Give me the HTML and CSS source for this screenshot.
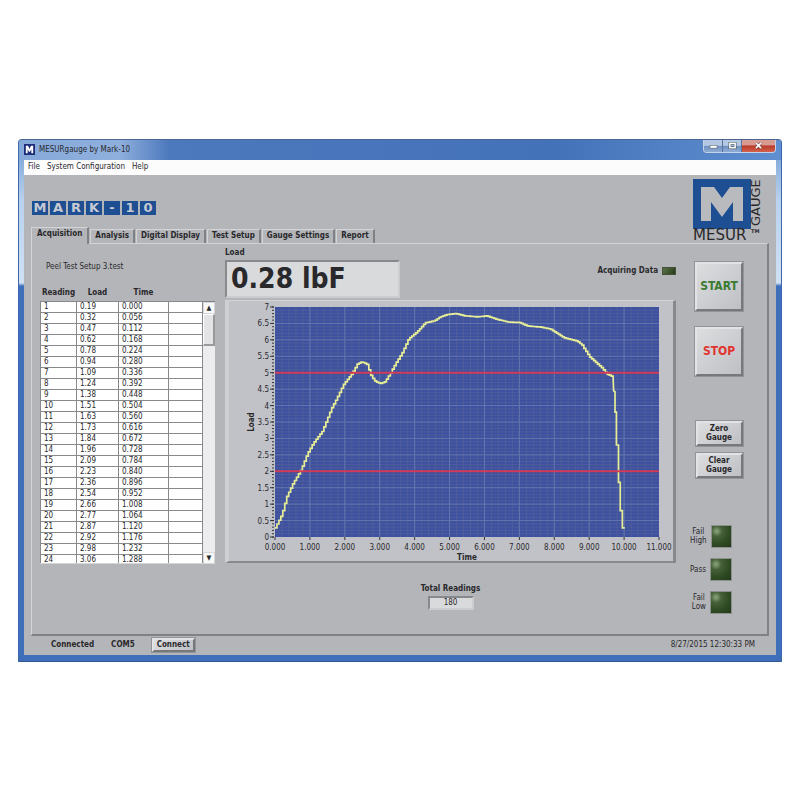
FILE: index.html
```html
<!DOCTYPE html>
<html lang="en">
  <head>
    <meta charset="UTF-8" />
    <meta name="viewport" content="width=device-width, initial-scale=1.0" />
    <title>MESURgauge by Mark-10</title>
    <link rel="stylesheet" href="styles.css">
  </head>
  <body>
    <div class="window">
      <header class="titlebar">
        <svg class="app-icon" viewBox="0 0 12 12" aria-hidden="true">
          <rect width="12" height="12" fill="#1d2c78" />
          <path d="M2 10V2h2.4L6 5.4 7.600 2H10v8H8V5.600L6.600 8.500H5.400L4 5.600V10z" fill="#fff" />
        </svg>
        <h1>MESURgauge by Mark-10</h1>
        <div class="win-buttons">
          <button type="button" aria-label="Minimize">
            <svg viewBox="0 0 10 8"><rect x="1" y="4" width="8" height="3" fill="#fff" stroke="#566" stroke-width=".6" /></svg>
          </button>
          <button type="button" aria-label="Maximize">
            <svg viewBox="0 0 10 8"><rect x="2" y="1.500" width="6" height="5" fill="none" stroke="#455" stroke-width="3" /><rect x="2" y="1.500" width="6" height="5" fill="none" stroke="#fff" stroke-width="1.800" /></svg>
          </button>
          <button type="button" class="close" aria-label="Close">
            <svg viewBox="0 0 10 8"><path d="M2 1l6 6M8 1L2 7" stroke="#533" stroke-width="3" /><path d="M2 1l6 6M8 1L2 7" stroke="#fff" stroke-width="1.900" /></svg>
          </button>
        </div>
      </header>

      <div class="client">
        <nav class="menu">
          <a href="#">File</a>
          <a href="#">System Configuration</a>
          <a href="#">Help</a>
        </nav>

        <div class="brand">
          <div class="left">
            <div class="mark10" aria-label="MARK-10">
              <span>M</span><span>A</span><span>R</span><span>K</span><span>-</span><span>1</span><span>0</span>
            </div>
            <div class="tabs" role="tablist">
              <button type="button" role="tab" class="active" aria-selected="true">Acquisition</button>
              <button type="button" role="tab">Analysis</button>
              <button type="button" role="tab">Digital Display</button>
              <button type="button" role="tab">Test Setup</button>
              <button type="button" role="tab">Gauge Settings</button>
              <button type="button" role="tab">Report</button>
            </div>
          </div>
          <div class="mesur">
            <svg class="mesur-m" viewBox="0 0 58 50" aria-hidden="true">
              <rect width="58" height="50" fill="#1f4f93" />
              <path d="M8 8h13l8 11 8-11h13v34H40V23L29 38 18 23v19H8z" fill="#b9babe" />
            </svg>
            <span class="gauge">GAUGE</span>
            <span class="word">MESUR</span>
            <span class="tm">TM</span>
          </div>
        </div>

        <main class="panel">
          <section class="readings">
            <p class="setup-name">Peel Test Setup 3.test</p>
            <div class="list">
              <div class="table-clip">
                <table>
                  <thead>
                    <tr><th>Reading</th><th>Load</th><th>Time</th><th></th></tr>
                  </thead>
                  <tbody id="rows"></tbody>
                </table>
              </div>
              <div class="scrollbar">
                <button type="button" aria-label="Scroll up">▲</button>
                <div class="thumb"></div>
                <button type="button" class="down" aria-label="Scroll down">▼</button>
              </div>
            </div>
          </section>

          <section class="center">
            <div class="top">
              <div class="load">
                <label for="load">Load</label>
                <input id="load" type="text" value="0.28 lbF" readonly />
              </div>
              <div class="acquiring">Acquiring Data <i class="led"></i></div>
            </div>
            <div class="chart">
              <svg id="graph" viewBox="0 0 444 260" role="img" aria-label="Load over time"></svg>
            </div>
            <div class="total">
              <label for="total">Total Readings</label>
              <input id="total" type="text" value="180" readonly />
            </div>
          </section>

          <aside class="controls">
            <button type="button" class="big start">START</button>
            <button type="button" class="big stop">STOP</button>
            <div class="small-buttons">
              <button type="button">Zero<br>Gauge</button>
              <button type="button">Clear<br>Gauge</button>
            </div>
            <div class="lamps">
              <div class="lamp"><span>Fail<br>High</span><i></i></div>
              <div class="lamp"><span>Pass</span><i></i></div>
              <div class="lamp"><span>Fail<br>Low</span><i></i></div>
            </div>
          </aside>
        </main>

        <footer class="status">
          <b class="state">Connected</b>
          <b class="port">COM5</b>
          <button type="button">Connect</button>
          <time datetime="2015-08-27T12:30:33">8/27/2015 12:30:33 PM</time>
        </footer>
      </div>
    </div>

    <script src="script.js"></script>
  </body>
</html>
```

FILE: styles.css
```css
:root {
  --gray: #b4b5b9;
  --light: #d3d4d8;
  --dark: #808185;
  --text: #29292c;
  --navy: #1f4f93;
}

* {
  box-sizing: border-box;
}

body {
  margin: 0;
  min-height: 100vh;
  padding: 0 18px;
  display: flex;
  align-items: center;
  background: #fff;
  color: var(--text);
  font-family: "DejaVu Sans Condensed", "Open Sans", sans-serif;
  font-size: 8px;
  line-height: 10px;
}

button,
input {
  font: inherit;
  color: inherit;
  margin: 0;
  padding: 0;
}

/* window frame */
.window {
  width: 100%;
  padding: 0 5px 6px;
  border: 1px solid #4b6590;
  border-color: #4b6590 #3c69ae #31568f;
  border-radius: 4px 4px 1px 1px;
  background: linear-gradient(#6f9bd3 0, #b9d2ee 60px, #cfe0f3 143px, #3f6fbb 146px, #3f6fbb 100%);
}

.titlebar {
  display: flex;
  align-items: center;
  height: 20px;
  margin: 0 -5px;
  padding-left: 5px;
  border-radius: 3px 3px 0 0;
  background: linear-gradient(90deg, #86a9da 0, #8fb0dd 100px, #4c78bd 150px, #4472b9 70%, #5f8fd0 100%);
}

.app-icon {
  width: 11px;
  height: 11px;
  margin-right: 4px;
}

h1 {
  margin: 0;
  font-size: 8px;
  font-weight: 400;
}

.win-buttons {
  display: flex;
  align-self: flex-start;
  margin: 0 5px 0 auto;
  border: 1px solid #c4d3e8;
  border-top: 0;
  border-radius: 0 0 4px 4px;
  overflow: hidden;
}

.win-buttons button {
  width: 19px;
  height: 12px;
  border: 0;
  border-right: 1px solid #56749f;
  background: linear-gradient(#b4c8e4 45%, #7090bf 50%, #8eabd4);
  line-height: 0;
}

.win-buttons svg {
  width: 9px;
  height: 7px;
}

.win-buttons .close {
  width: 33px;
  border: 0;
  background: linear-gradient(#d99a92 40%, #b83b2b 50%, #d4614b);
}

.client {
  background: var(--gray);
}

.menu {
  display: flex;
  gap: 7px;
  height: 15px;
  padding: 2px 4px;
  background: #fcfcfc;
}

.menu a {
  color: inherit;
  text-decoration: none;
}

/* logos and tabs */
.brand {
  display: flex;
  justify-content: space-between;
  height: 68px;
  padding: 0 15px 0 7px;
}

.left {
  display: flex;
  flex-direction: column;
  justify-content: space-between;
  padding-top: 26px;
}

.mark10 {
  display: flex;
  gap: 2px;
  padding-left: 1px;
}

.mark10 span {
  width: 16px;
  height: 14px;
  background: var(--navy);
  color: #c6cad4;
  font: bold 13px/14px "DejaVu Sans", sans-serif;
  text-align: center;
}

.tabs {
  display: flex;
  align-items: flex-end;
  gap: 1px;
}

.tabs button {
  height: 14px;
  padding: 0 4px;
  border: 1px solid var(--light);
  border-right: 2px solid var(--dark);
  border-bottom: 0;
  background: var(--gray);
  font-weight: 700;
  white-space: nowrap;
}

.tabs .active {
  height: 17px;
  margin-bottom: -1px;
  padding: 0 5px 3px;
  position: relative;
}

.mesur {
  display: grid;
  grid-template-columns: 58px 10px;
  grid-template-rows: 50px 12px;
  padding-top: 4px;
  font-family: "DejaVu Sans", sans-serif;
  font-weight: 700;
}

.mesur-m {
  width: 58px;
  height: 50px;
}

.gauge {
  writing-mode: vertical-rl;
  rotate: 180deg;
  font-size: 13px;
  font-weight: 400;
  line-height: 10px;
  text-align: right;
}

.word {
  font-size: 15px;
  font-weight: 400;
  line-height: 12px;
}

.tm {
  font-size: 5px;
  line-height: 5px;
}

/* main tab page */
.panel {
  display: grid;
  grid-template-columns: 175px minmax(0, 1fr) 66px;
  column-gap: 10px;
  height: 393px;
  margin: 0 7px;
  padding: 0 15px 0 8px;
  border: 1px solid var(--light);
  border-right: 2px solid var(--dark);
  border-bottom: 2px solid var(--dark);
}

.setup-name {
  margin: 18px 0 16px 6px;
}

.list {
  display: flex;
  height: 276px;
}

.table-clip {
  flex: 1;
  overflow: hidden;
  border-bottom: 1px solid var(--light);
}

table {
  width: 100%;
  border-collapse: collapse;
  table-layout: fixed;
}

th {
  height: 13px;
  padding: 0 0 3px;
  line-height: 10px;
}

th:nth-child(1) { width: 36px; }
th:nth-child(2) { width: 42px; }
th:nth-child(3) { width: 50px; }

td {
  height: 11px;
  padding: 0 3px;
  border: 1px solid #88898c;
  background: #fff;
  line-height: 10px;
}

.scrollbar {
  display: flex;
  flex-direction: column;
  width: 12px;
  margin-top: 13px;
  background: #ededf0;
  border-top: 1px solid var(--dark);
}

.scrollbar button {
  height: 12px;
  border: 1px solid #d7d7d9;
  background: #f8f8f8;
  font-size: 7px;
  line-height: 10px;
}

.scrollbar .down {
  margin-top: auto;
}

.thumb {
  height: 32px;
  border: 1px solid #fff;
  border-right: 2px solid #98999c;
  border-bottom: 2px solid #98999c;
  background: #e4e4e6;
}

.top {
  display: flex;
  justify-content: space-between;
  height: 56px;
  padding-top: 4px;
}

.top label,
.total label,
.acquiring {
  font-weight: 700;
}

.load label {
  display: block;
}

.load input {
  display: block;
  width: 175px;
  height: 38px;
  margin-top: 2px;
  padding-left: 4px;
  border: 2px solid #88898d;
  border-color: #88898d #cbccd0 #cbccd0 #88898d;
  background: #d9dadc;
  font-size: 28px;
  font-weight: 700;
}

.acquiring {
  display: flex;
  align-items: center;
  align-self: flex-start;
  gap: 4px;
  padding-top: 18px;
}

.led {
  width: 14px;
  height: 8px;
  border: 1px solid #46503c;
  background: linear-gradient(120deg, #5b7148, #263b18);
}

.chart {
  border: 1px solid var(--light);
  border-left: 4px solid #cecfd3;
  border-right: 3px solid #88898d;
  border-bottom: 2px solid #88898d;
  background: #c1c2c7;
}

.chart svg {
  display: block;
  width: 100%;
}

.axis {
  fill: var(--text);
  font-size: 8px;
}

.axis-title {
  font-weight: 700;
}

.tick {
  stroke: #333;
}

.minor {
  stroke: #54619a;
  stroke-width: .7;
}

.major {
  stroke: #6275ab;
}

.limit {
  stroke: #d33a57;
  stroke-width: 2;
}

.trace {
  fill: none;
  stroke: #e8ee96;
  stroke-width: 1.7;
}

.total {
  display: flex;
  flex-direction: column;
  align-items: center;
  gap: 2px;
  padding-top: 21px;
}

.total input {
  width: 46px;
  height: 14px;
  border: 2px solid #88898d;
  border-color: #88898d #cbccd0 #cbccd0 #88898d;
  background: #d9dadc;
  text-align: center;
}

/* right column */
.controls {
  display: flex;
  flex-direction: column;
  align-items: center;
  padding-top: 18px;
}

.controls button,
.status button {
  border: 2px solid #e3e3e5;
  border-right-color: #77787c;
  border-bottom-color: #77787c;
  outline: 1px solid #939498;
  background: linear-gradient(135deg, #dcdddf, #bfc0c4);
  font-weight: 700;
}

.controls .big {
  width: 48px;
  height: 49px;
  margin-bottom: 16px;
  font-size: 12px;
}

.controls .start {
  color: #3b7a31;
}

.controls .stop {
  color: #e13430;
}

.small-buttons {
  display: grid;
  gap: 7px;
  margin-top: 29px;
}

.small-buttons button {
  width: 47px;
  height: 25px;
  line-height: 9px;
}

.lamps {
  display: grid;
  gap: 10px;
  align-self: flex-start;
  margin: 47px 0 0 4px;
}

.lamp {
  display: flex;
  align-items: center;
  justify-content: flex-end;
  gap: 4px;
  width: 42px;
  text-align: center;
  line-height: 9px;
}

.lamp i {
  width: 22px;
  height: 23px;
  border: 1px solid #8c8f8b;
  background: radial-gradient(circle at 25% 25%, #8ea67c 0, #46613a 25%, #2f4b24 60%, #223a1a 100%);
}

.status {
  display: flex;
  align-items: center;
  height: 19px;
  padding: 0 21px 0 27px;
}

.port {
  margin: 0 17px 0 17px;
}

.status button {
  width: 43px;
  height: 14px;
}

.status time {
  margin-left: auto;
}
```

FILE: script.js
```js
const loads = [
  0.19, 0.32, 0.47, 0.62, 0.78, 0.94, 1.09, 1.24, 1.38, 1.51, 1.63, 1.73,
  1.84, 1.96, 2.09, 2.23, 2.36, 2.54, 2.66, 2.77, 2.87, 2.92, 2.98, 3.06
];
const interval = 0.056;

document.getElementById("rows").innerHTML = loads.map((load, i) =>
  `<tr><td>${i + 1}</td><td>${load.toFixed(2)}</td><td>${(i * interval).toFixed(3)}</td><td></td></tr>`
).join("");

// [time, load]
const curve = [
  [0, 0.28], [0.19, 0.67], [0.33, 1.22], [0.51, 1.63], [0.74, 2.04], [0.93, 2.55],
  [1.1, 2.87], [1.34, 3.2], [1.48, 3.56], [1.62, 3.93], [1.77, 4.23], [1.95, 4.63],
  [2.2, 4.97], [2.35, 5.26], [2.48, 5.33], [2.63, 5.26], [2.75, 4.9], [2.87, 4.73],
  [3.01, 4.67], [3.15, 4.73], [3.3, 4.99], [3.46, 5.3], [3.63, 5.59], [3.82, 6.03],
  [4.06, 6.24], [4.3, 6.52], [4.56, 6.58], [4.73, 6.7], [4.92, 6.77], [5.16, 6.8],
  [5.44, 6.73], [5.78, 6.7], [6.07, 6.73], [6.3, 6.64], [6.68, 6.54], [6.99, 6.53],
  [7.23, 6.42], [7.59, 6.39], [7.88, 6.33], [8.28, 6.06], [8.66, 5.96], [8.79, 5.84],
  [9, 5.49], [9.36, 5.15], [9.5, 4.96], [9.63, 4.9], [9.69, 4.78]
];
// the load drops off within a few samples
const drop = [
  [9.7, 4.45], [9.74, 4.42], [9.74, 3.8], [9.78, 3.8], [9.78, 2.8], [9.84, 2.8],
  [9.84, 1.66], [9.89, 1.66], [9.89, 0.8], [9.95, 0.8], [9.95, 0.28], [10.02, 0.28]
];

const left = 46, top0 = 6, width = 384, height = 230;
const px = t => left + (t / 11) * width;
const py = v => top0 + height - (v / 7) * height;

function loadAt(t) {
  const i = curve.findIndex(p => p[0] >= t);
  if (i <= 0) return curve[0][1];
  const [t0, v0] = curve[i - 1];
  const [t1, v1] = curve[i];
  return v0 + (v1 - v0) * (t - t0) / (t1 - t0);
}

function line(cls, x1, y1, x2, y2) {
  return `<line class="${cls}" x1="${x1}" y1="${y1}" x2="${x2}" y2="${y2}" />`;
}

let svg = `<rect x="${left}" y="${top0}" width="${width}" height="${height}" fill="#3d51a0" />`;

for (let i = 1; i < 55; i++) svg += line("minor", px(i / 5), top0, px(i / 5), top0 + height);
for (let i = 1; i < 70; i++) svg += line("minor", left, py(i / 10), left + width, py(i / 10));
for (let i = 0; i <= 70; i++) svg += line("tick", left - 3, py(i / 10), left - 1, py(i / 10));

for (let t = 0; t <= 11; t++) {
  if (t > 0 && t < 11) svg += line("major", px(t), top0, px(t), top0 + height);
  svg += line("tick", px(t), top0 + height, px(t), top0 + height + 3);
  svg += `<text class="axis" x="${px(t)}" y="249" text-anchor="middle">${t.toFixed(3)}</text>`;
}
for (let v = 0; v <= 7; v += 0.5) {
  if (v > 0 && v < 7) svg += line("major", left, py(v), left + width, py(v));
  svg += line("tick", left - 5, py(v), left - 1, py(v));
  svg += `<text class="axis" x="${left - 6}" y="${py(v) + 3}" text-anchor="end">${v}</text>`;
}

let d = `M${px(0)} ${py(loadAt(0))}`;
for (let t = interval; t < 9.69; t += interval) d += `H${px(t)}V${py(loadAt(t))}`;
drop.forEach(([t, v]) => { d += `L${px(t)} ${py(v)}`; });
svg += `<path class="trace" d="${d}" />`;

svg += line("limit", left, py(5), left + width, py(5));
svg += line("limit", left, py(2), left + width, py(2));
svg += `<text class="axis axis-title" x="${left + width / 2}" y="259" text-anchor="middle">Time</text>`;
svg += `<text class="axis axis-title" transform="translate(25 121) rotate(-90)" text-anchor="middle">Load</text>`;

document.getElementById("graph").innerHTML = svg;
```
